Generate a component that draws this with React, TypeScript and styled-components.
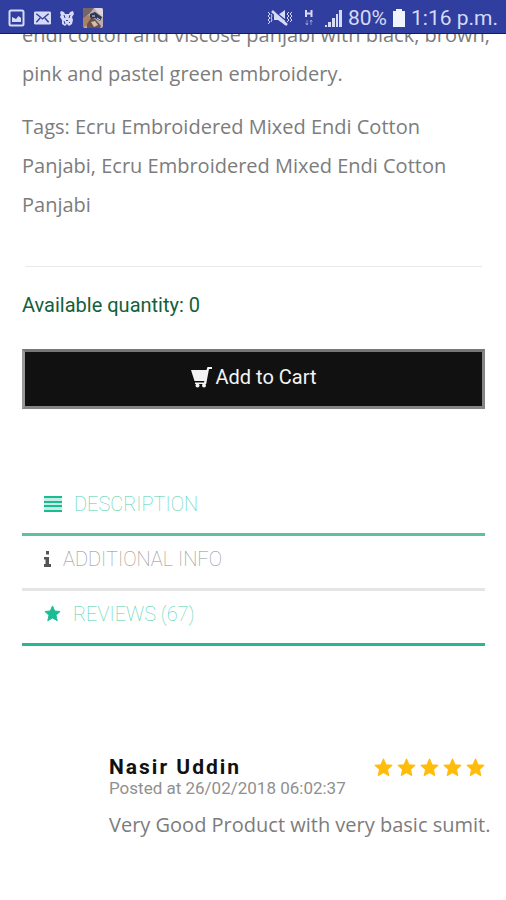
import React from "react";
import styled, { createGlobalStyle } from "styled-components";

const GlobalStyle = createGlobalStyle`
  *, *::before, *::after { box-sizing: border-box; }
  body { margin: 0; background: #fff; }
`;

const bodyFont = `"Open Sans", "Noto Sans", sans-serif`;
const uiFont = `Roboto, "Liberation Sans", sans-serif`;

const Page = styled.div`
  min-height: 100vh;
  background: #fff;
  font-family: ${uiFont};
`;

const StatusBar = styled.header`
  position: sticky;
  top: 0;
  z-index: 1;
  display: flex;
  align-items: center;
  justify-content: space-between;
  height: 34px;
  padding: 2px 8px 0;
  background: #303f9f;
  border-bottom: 1px solid #0a12a8;
  color: #d5daf6;
`;

const StatusGroup = styled.div<{ $gap: number }>`
  display: flex;
  align-items: center;
  gap: ${(p) => p.$gap}px;
`;

const StatusText = styled.span`
  font-size: 21px;
  line-height: 30px;
  white-space: nowrap;
`;

const Viewport = styled.main`
  overflow: hidden;
`;

const Scrolled = styled.div`
  margin-top: -19px;
  padding: 0 21px 0 22px;
`;

const Copy = styled.p`
  margin: 0 -6px 14px 0;
  font-family: ${bodyFont};
  font-size: 20px;
  line-height: 39px;
  color: #7c7c7c;
`;

const Divider = styled.hr`
  margin: 42px 3px 26px;
  border: 0;
  border-top: 1px solid #e9e9e9;
`;

const Stock = styled.p`
  margin: 0 0 32px;
  font-size: 20px;
  line-height: 24px;
  color: #14603a;
`;

const CartButton = styled.button`
  display: flex;
  align-items: center;
  justify-content: center;
  gap: 4px;
  width: 100%;
  height: 60px;
  padding: 0 0 4px;
  border: 3px solid;
  border-color: #777 #858585 #858585 #999;
  background: #111;
  color: #f4f4f4;
  font-family: ${uiFont};
  font-size: 20px;
`;

const TabList = styled.nav`
  display: flex;
  flex-direction: column;
  margin-top: 72px;
`;

const Tab = styled.a<{ $active?: boolean; $line: string }>`
  display: flex;
  align-items: center;
  gap: 12px;
  height: 55px;
  padding: 0 22px 7px;
  border-bottom: 3px solid ${(p) => p.$line};
  color: ${(p) => (p.$active ? "#1abc94" : "#555")};
  text-decoration: none;
`;

const TabLabel = styled.span<{ $active?: boolean }>`
  font-size: 20px;
  font-weight: 100;
  line-height: 24px;
  color: ${(p) => (p.$active ? "#4fcfab" : "#8e8e8e")};
`;

const Review = styled.article`
  margin: 109px 0 0 87px;
`;

const ReviewHead = styled.header`
  display: flex;
  align-items: center;
  justify-content: space-between;
`;

const Author = styled.h2`
  margin: 0;
  font-size: 21px;
  font-weight: 700;
  line-height: 24px;
  letter-spacing: 2px;
  color: #111;
`;

const Stars = styled.div`
  display: flex;
  gap: 4px;
`;

const Posted = styled.p`
  margin: 0;
  font-size: 17px;
  line-height: 18px;
  color: #909090;
`;

const ReviewText = styled.p`
  margin: 8px -6px 0 0;
  font-family: ${bodyFont};
  font-size: 20px;
  line-height: 39px;
  color: #7c7c7c;
`;

const PictureIcon = () => (
  <svg width="17" height="18" viewBox="0 0 17 18" aria-hidden="true">
    <rect x="1.5" y="1.5" width="14" height="15" rx="1.5" fill="none" stroke="currentColor" strokeWidth="2" />
    <path d="M4 13V8l2 1 2 1 2.500-3L13 9v4z" fill="currentColor" />
  </svg>
);

const MailIcon = () => (
  <svg width="17" height="14" viewBox="0 0 18 14" aria-hidden="true">
    <rect width="18" height="14" rx="1.500" fill="currentColor" />
    <path d="M2.500 2.500 9 8l6.500-5.500M2.500 11.500 6.500 7M15.500 11.500l-4-4.500" fill="none" stroke="#303f9f" strokeWidth="1.500" />
  </svg>
);

const CatIcon = () => (
  <svg width="14" height="16" viewBox="0 0 14 16" aria-hidden="true">
    <path d="M1 1l3 1 1 2h4l1-2 3-1 1 3-2 3 1 3-1 4-3 2-2-2-2 2-3-2 0-4-2-3 1-2-1-2z" fill="currentColor" />
    <path d="M4 5l1 3M10 5L9 8M6 10l1 1 1-1M4 11l1 3M9 12l1 1" fill="none" stroke="#303f9f" />
  </svg>
);

const PhotoThumb = () => (
  <svg width="20" height="20" viewBox="0 0 20 20" aria-hidden="true">
    <rect width="20" height="20" rx="2" fill="#b9aeb2" />
    <path d="M0 2q0-2 2-2h9L7 5 0 11z" fill="#776465" />
    <path d="M11 0h7q2 0 2 2v7l-5-4z" fill="#dcd6dc" />
    <path d="M7 6l5-2 4 3 3 2-2 4-5-3-5 2z" fill="#30375a" />
    <path d="M0 10l6-3 3 5-4 6-5 1z" fill="#a98265" />
    <path d="M4 16l4-6 4 1 6 7-1 2H4z" fill="#69514d" />
    <path d="M8 14l4-1 3 4-4 2z" fill="#d6bdab" />
    <path d="M9 8h3M14 10l3 2" stroke="#e8e4ea" />
  </svg>
);

const MuteIcon = () => (
  <svg width="26" height="18" viewBox="0 0 26 18" aria-hidden="true">
    <path d="M7 6h4l7-5v15l-7-5H7z" fill="currentColor" />
    <path d="M7 2l15 12" stroke="#303f9f" strokeWidth="1.500" />
    <path d="M5 2l15 14" stroke="currentColor" strokeWidth="2.500" />
    <path d="M1 3l2 2-2 2 2 2-2 2 2 2-2 2M4 5l1 2-1 2 1 2-1 2M22 3l-2 2 2 2-2 2 2 2-2 2M25 3l-2 2 2 2-2 2 2 2-2 2" fill="none" stroke="currentColor" />
  </svg>
);

const DataIcon = () => (
  <svg width="8" height="17" viewBox="0 0 8 17" aria-hidden="true">
    <path d="M1 1v7M6.500 1v7M1 4.500h6" stroke="currentColor" strokeWidth="2" />
    <path d="M2 11v5M.5 14L2 16l1-2M6 16v-5M5 13l1-2 1.500 2" fill="none" stroke="currentColor" opacity=".5" />
  </svg>
);

const SignalIcon = () => (
  <svg width="17" height="18" viewBox="0 0 17 18" aria-hidden="true">
    <path d="M0 16h2v2H0zM3 13h3v5H3zM7 9h3v9H7zM11 5h2v13h-2zM14 1h3v17h-3z" fill="currentColor" />
  </svg>
);

const BatteryIcon = () => (
  <svg width="12" height="18" viewBox="0 0 12 18" aria-hidden="true">
    <path d="M3 0h6v2h3v16H0V2h3z" fill="#f0f2fc" />
  </svg>
);

const CartIcon = () => (
  <svg width="21" height="21" viewBox="0 0 21 21" aria-hidden="true">
    <path d="M0 3h15.500L16.500 0H21v2h-3l-2.800 15H4v-1.500h9l.4-1.500H3.500z" fill="currentColor" />
    <circle cx="6.500" cy="18.500" r="2" fill="currentColor" />
    <circle cx="13" cy="18.500" r="2" fill="currentColor" />
  </svg>
);

const LinesIcon = () => (
  <svg width="18" height="16" viewBox="0 0 18 16" aria-hidden="true">
    <path d="M0 0h18v16H0z" fill="currentColor" opacity=".25" />
    <path d="M0 1h18M0 6h18M0 10h18M0 15h18" stroke="currentColor" strokeWidth="2" />
  </svg>
);

const InfoIcon = () => (
  <svg width="7" height="16" viewBox="0 0 7 16" aria-hidden="true">
    <path d="M2 0h3v3.500H2zM0 6h5v7h2v3H0v-3h1.500V8.500H0z" fill="currentColor" />
  </svg>
);

const StarIcon = ({ size, color = "currentColor" }: { size: number; color?: string }) => (
  <svg width={size} height={size} viewBox="0 0 18 18" aria-hidden="true">
    <path
      d="M9 1l2.300 5.300 5.700.6-4.300 3.900 1.300 5.800L9 13.700l-5 2.900 1.300-5.800L1 6.900l5.700-.6z"
      fill={color}
      stroke={color}
      strokeWidth="1"
      strokeLinejoin="round"
    />
  </svg>
);

export default function App() {
  return (
    <Page>
      <GlobalStyle />
      <StatusBar>
        <StatusGroup $gap={9}>
          <PictureIcon />
          <MailIcon />
          <CatIcon />
          <PhotoThumb />
        </StatusGroup>
        <StatusGroup $gap={6}>
          <StatusGroup $gap={12}>
            <MuteIcon />
            <DataIcon />
            <SignalIcon />
          </StatusGroup>
          <StatusText>80%</StatusText>
          <BatteryIcon />
          <StatusText>1:16 p.m.</StatusText>
        </StatusGroup>
      </StatusBar>

      <Viewport>
        <Scrolled>
          <Copy>
            endi cotton and viscose panjabi with black, brown, pink and pastel green embroidery.
          </Copy>
          <Copy>
            Tags: Ecru Embroidered Mixed Endi Cotton Panjabi, Ecru Embroidered Mixed Endi Cotton Panjabi
          </Copy>
          <Divider />
          <Stock>Available quantity: 0</Stock>
          <CartButton type="button">
            <CartIcon />
            Add to Cart
          </CartButton>

          <TabList>
            <Tab href="#description" $active $line="#5fbfa0">
              <LinesIcon />
              <TabLabel $active>DESCRIPTION</TabLabel>
            </Tab>
            <Tab href="#additional-info" $line="#e4e6e6">
              <InfoIcon />
              <TabLabel>ADDITIONAL INFO</TabLabel>
            </Tab>
            <Tab href="#reviews" $active $line="#2bb593">
              <StarIcon size={17} />
              <TabLabel $active>REVIEWS (67)</TabLabel>
            </Tab>
          </TabList>

          <Review>
            <ReviewHead>
              <Author>Nasir Uddin</Author>
              <Stars role="img" aria-label="5 out of 5 stars">
                {[1, 2, 3, 4, 5].map((n) => (
                  <StarIcon key={n} size={19} color="#ffbc0b" />
                ))}
              </Stars>
            </ReviewHead>
            <Posted>Posted at 26/02/2018 06:02:37</Posted>
            <ReviewText>Very Good Product with very basic sumit.</ReviewText>
          </Review>
        </Scrolled>
      </Viewport>
    </Page>
  );
}
